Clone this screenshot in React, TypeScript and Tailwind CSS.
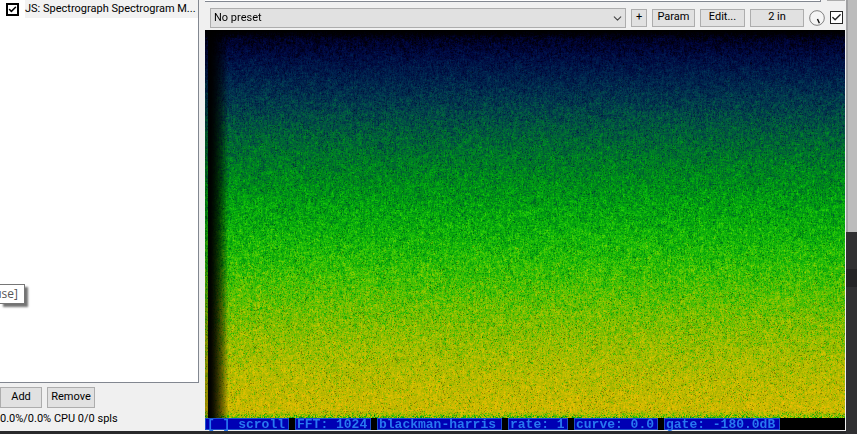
import { useEffect, useRef } from "react";
import { Check, ChevronDown } from "lucide-react";

type Stop = [number, number, number, number];

const levels: Stop[] = [
  [0, 0, 0, 8],
  [0.02, 0, 0, 30],
  [0.06, 0, 8, 64],
  [0.12, 0, 32, 76],
  [0.18, 2, 56, 78],
  [0.24, 2, 84, 66],
  [0.31, 0, 112, 46],
  [0.39, 0, 140, 26],
  [0.47, 4, 166, 14],
  [0.56, 26, 186, 8],
  [0.64, 66, 192, 4],
  [0.73, 118, 190, 0],
  [0.82, 160, 188, 0],
  [0.9, 186, 186, 0],
  [1, 208, 184, 0],
  [1.15, 236, 172, 8],
];

function colourAt(level: number) {
  const v = Math.max(0, Math.min(1.15, level));
  let i = 1;
  while (i < levels.length - 1 && levels[i][0] < v) i++;
  const a = levels[i - 1];
  const b = levels[i];
  const t = (v - a[0]) / (b[0] - a[0]);
  return [1, 2, 3].map((k) => a[k] + (b[k] - a[k]) * t);
}

function paint(canvas: HTMLCanvasElement) {
  const w = canvas.clientWidth;
  const h = canvas.clientHeight;
  const ctx = canvas.getContext("2d");
  if (!ctx || !w || !h) return;
  canvas.width = w;
  canvas.height = h;
  const image = ctx.createImageData(w, h);
  let seed = 90210;
  const random = () => {
    seed = (Math.imul(seed, 1664525) + 1013904223) >>> 0;
    return seed / 4294967296;
  };
  const column = new Float32Array(w);
  for (let y = 0; y < h; y++) {
    const depth = y / h;
    const edge = y > h - 8 ? (y - h + 8) / 8 : 0;
    let previous = 0;
    for (let x = 0; x < w; x++) {
      const n = random() + random() + random() - 1.5;
      previous = previous * 0.3 + n * 0.75;
      column[x] = column[x] * 0.4 + previous;
      const spread = 0.03 + Math.min(depth, 0.5) * 0.16;
      const dip = random() < 0.07 ? 0.18 * depth : 0;
      const level = depth + column[x] * spread - dip - edge * 0.6 * random();
      const dark = random() < 0.05 ? 0.74 : 1;
      const fade = x < 3 ? 0.75 : x < 23 ? Math.pow((x - 3) / 20, 1.7) : 1;
      const light = 1 + column[x] * (depth > 0.65 ? 0.06 : 0.08);
      const shade = light * dark * fade * (y < 8 ? y / 8 : 1);
      const c = colourAt(level);
      const p = (y * w + x) * 4;
      image.data[p] = c[0] * shade;
      image.data[p + 1] = c[1] * shade;
      image.data[p + 2] = c[2] * shade;
      image.data[p + 3] = 255;
    }
  }
  ctx.putImageData(image, 0, 0);
}

function Spectrogram() {
  const ref = useRef<HTMLCanvasElement>(null);
  useEffect(() => {
    const canvas = ref.current;
    if (!canvas) return;
    paint(canvas);
    const redraw = () => paint(canvas);
    window.addEventListener("resize", redraw);
    return () => window.removeEventListener("resize", redraw);
  }, []);
  return (
    <div className="min-h-0 flex-1">
      <canvas ref={ref} aria-label="Spectrogram" className="block h-full w-full" />
    </div>
  );
}

const button =
  "flex shrink-0 items-center justify-center border border-[#adadad] bg-[#e1e1e1] whitespace-nowrap";

const settings = [
  { label: "[ ] scroll", width: "w-[84px]" },
  { label: "FFT: 1024", width: "w-[76px]" },
  { label: "blackman-harris", width: "w-[125px]" },
  { label: "rate: 1", width: "w-[60px]" },
  { label: "curve: 0.0", width: "w-[84px]" },
  { label: "gate: -180.0dB", width: "w-[116px]" },
];

function EffectList() {
  return (
    <aside className="flex w-[199px] shrink-0 flex-col">
      <div className="flex-1 border-r border-b border-[#828790] bg-white">
        <label className="flex h-[18px] items-center gap-[6px] pl-[6px]">
          <span className="relative flex">
            <input
              type="checkbox"
              defaultChecked
              className="peer size-[13px] appearance-none border-2 border-black bg-white"
            />
            <Check className="pointer-events-none absolute inset-[2px] hidden size-[9px] stroke-[4] peer-checked:block" />
          </span>
          <span className="flex-1 bg-[#f2f2f2] leading-[18px] whitespace-nowrap">
            JS: Spectrograph Spectrogram M...
          </span>
        </label>
        <div
          role="tooltip"
          className="absolute top-[284px] left-0 flex h-5 w-[25px] items-center justify-end border border-l-0 border-[#767676] bg-white pr-[6px] font-['Open_Sans',sans-serif] text-[12px] text-[#575757] shadow-[3px_3px_2px_#0000008c]"
        >
          use]
        </div>
      </div>
      <div className="mt-1 flex gap-[5px]">
        <button className={`${button} h-[21px] w-[42px]`}>Add</button>
        <button className={`${button} h-[21px] w-12`}>Remove</button>
      </div>
      <p className="mt-px mb-[2px] h-5 leading-5 whitespace-nowrap">0.0%/0.0% CPU 0/0 spls</p>
    </aside>
  );
}

function Toolbar() {
  return (
    <div className="flex h-[23px] items-center gap-[5px] pb-[2px] pl-[5px]">
      <div className="relative min-w-0 flex-1">
        <select
          aria-label="Preset"
          className="block h-5 w-full appearance-none border border-[#adadad] bg-[#e1e1e1] pt-px pl-[3px]"
        >
          <option>No preset</option>
        </select>
        <ChevronDown className="pointer-events-none absolute top-1 right-[2px] size-[13px] stroke-[2] text-[#444]" />
      </div>
      <button className={`${button} h-[18px] w-4`}>+</button>
      <button className={`${button} h-[18px] w-[43px]`}>Param</button>
      <button className={`${button} h-[18px] w-[45px]`}>Edit...</button>
      <button className={`${button} h-[18px] w-[54px]`}>2 in</button>
      <button aria-label="Wet mix" className="shrink-0">
        <svg viewBox="0 0 17 17" className="block size-4" fill="none">
          <circle cx="8.500" cy="8.500" r="7.800" fill="#f5f5f5" stroke="#777" />
          <path d="M9 9.500 11 14" stroke="#111" strokeWidth="1.500" />
        </svg>
      </button>
      <label className="relative flex shrink-0 pr-[2px]">
        <input
          type="checkbox"
          aria-label="Enable effect"
          defaultChecked
          className="peer size-[13px] appearance-none border border-[#222] bg-white"
        />
        <Check className="pointer-events-none absolute top-px left-px hidden size-[11px] stroke-[3] text-[#222] peer-checked:block" />
      </label>
    </div>
  );
}

export default function App() {
  return (
    <main className="relative flex h-screen overflow-hidden bg-[#29292b] font-[Roboto,sans-serif] text-[11px] text-black">
      <section className="mb-[3px] flex min-w-0 flex-1 gap-[6px] bg-[#f0f0f0]">
        <EffectList />
        <div className="flex min-w-0 flex-1 flex-col pr-px pb-px">
          <div className="flex h-[7px] items-start justify-between">
            <div className="h-[2px] w-[616px] border-r border-b border-[#828790] bg-white" />
            <div className="h-px w-[18px] bg-[#adadad]" />
          </div>
          <Toolbar />
          <Spectrogram />
          <div className="flex h-3 gap-[6px] bg-black font-['Liberation_Mono',monospace] text-[13px] font-bold">
            {settings.map((s) => (
              <button
                key={s.label}
                className={`${s.width} flex items-center border border-[#1c50cc] bg-[#0000b4] pt-px pl-px leading-[10px] whitespace-nowrap text-[#2878f0]`}
              >
                {s.label}
              </button>
            ))}
          </div>
        </div>
      </section>
      <div className="flex w-[11px] shrink-0 flex-col bg-[#303032]">
        <div className="h-[232px] border-l-2 border-[#a0a0a2] bg-[#bcbcbc]" />
        <div className="mt-[37px] h-[18px] bg-[#242426]" />
      </div>
    </main>
  );
}
